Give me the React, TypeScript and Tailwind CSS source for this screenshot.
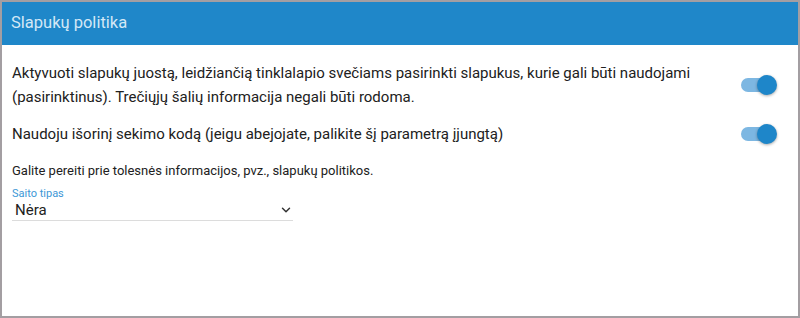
import { ChevronDown } from "lucide-react";

function Toggle() {
  return (
    <div className="relative w-[36px] h-[20px] shrink-0 flex items-center">
      <div className="w-[34px] h-[14px] rounded-full bg-[#7db7e2]" />
      <div className="absolute right-0 top-0 w-[20px] h-[20px] rounded-full bg-[#1e86c9] shadow-[0_1px_3px_rgba(0,0,0,0.35)]" />
    </div>
  );
}

export default function App() {
  return (
    <div
      className="w-[800px] h-[318px] border-2 border-[#a39ea2] bg-white flex flex-col text-[#212121]"
      style={{ fontFamily: "Roboto, 'Noto Sans', sans-serif" }}
    >
      <div className="h-[43px] bg-[#1f87c9] flex items-center px-[9px] shrink-0">
        <span className="text-[16.5px] text-[#d3e8f6]">Slapukų politika</span>
      </div>
      <div className="flex flex-col pl-[10px] pr-[21px] pt-[16px]">
        <div className="flex items-center justify-between gap-6">
          <p className="text-[15px] leading-[24px]">
            Aktyvuoti slapukų juostą, leidžiančią tinklalapio svečiams pasirinkti slapukus, kurie gali būti naudojami
            (pasirinktinus). Trečiųjų šalių informacija negali būti rodoma.
          </p>
          <Toggle />
        </div>
        <div className="flex items-center justify-between gap-6 mt-[13px]">
          <p className="text-[15px] leading-[24px]">
            Naudoju išorinį sekimo kodą (jeigu abejojate, palikite šį parametrą įjungtą)
          </p>
          <Toggle />
        </div>
        <p className="text-[13px] leading-[20px] mt-[15px]">
          Galite pereiti prie tolesnės informacijos, pvz., slapukų politikos.
        </p>
        <div className="w-[281px] mt-[6px] border-b border-[#dcdcdc] pb-[1px]">
          <div className="text-[11px] leading-[14px] text-[#3d97d6]">Saito tipas</div>
          <div className="flex items-center justify-between pl-[3px] pr-0">
            <span className="text-[15px] leading-[18px]">Nėra</span>
            <ChevronDown size={14} strokeWidth={2.5} className="text-[#333]" />
          </div>
        </div>
      </div>
    </div>
  );
}
